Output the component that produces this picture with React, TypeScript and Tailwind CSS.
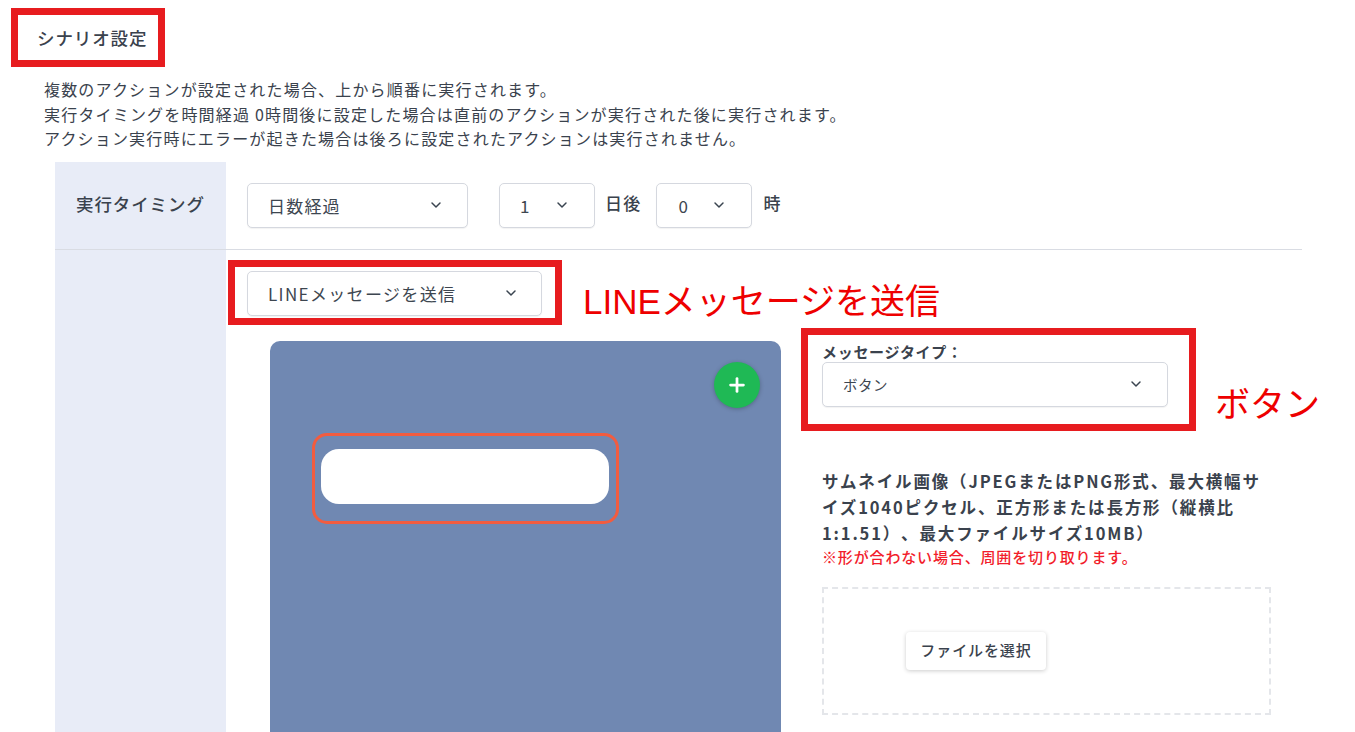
import { ChevronDown, Plus } from "lucide-react";

function Select({ label, className }: { label: string; className: string }) {
  return (
    <div
      className={`flex h-[45px] items-center justify-between rounded-[5px] border border-[#d5d8df] bg-white text-[#3d4650] shadow-[0_1px_1px_rgba(0,0,0,0.05)] ${className}`}
    >
      <span className="pt-[1px]">{label}</span>
      <ChevronDown size={16} strokeWidth={2.2} className="text-[#3a4450]" />
    </div>
  );
}

export default function App() {
  return (
    <div className="relative h-[732px] w-[1355px] overflow-hidden bg-white font-['Noto_Sans_CJK_JP','Noto_Sans',sans-serif] text-[#3a424d] [text-spacing-trim:space-all]">
      <h1 className="pl-[37px] pt-[26px] text-[17.5px] font-medium leading-[23px] tracking-[0.9px]">シナリオ設定</h1>

      <div className="mt-[28px] pl-[44px] text-[16px] leading-[24.5px] tracking-[1.18px]">
        <p>複数のアクションが設定された場合、上から順番に実行されます。</p>
        <p>実行タイミングを時間経過 0時間後に設定した場合は直前のアクションが実行された後に実行されます。</p>
        <p>アクション実行時にエラーが起きた場合は後ろに設定されたアクションは実行されません。</p>
      </div>

      <div className="ml-[55px] mt-[11px] w-[1247px]">
        <div className="flex h-[88px] border-b border-[#d9dce3]">
          <div className="flex w-[171px] items-center bg-[#e8ecf7] pb-[2px] pl-[21px] text-[17.5px] font-medium tracking-[0.9px]">
            実行タイミング
          </div>
          <div className="flex items-start pl-[21px] pt-[21px] text-[17px] tracking-[1.2px]">
            <Select label="日数経過" className="w-[221px] pl-[20px] pr-[23px]" />
            <Select label="1" className="ml-[31px] w-[96px] pl-[20px] pr-[24px]" />
            <span className="ml-[10px] mt-[7px] font-medium">日後</span>
            <Select label="0" className="ml-[15px] w-[96px] pl-[21px] pr-[24px]" />
            <span className="ml-[11px] mt-[7px] font-medium">時</span>
          </div>
        </div>

        <div className="flex h-[500px]">
          <div className="w-[171px] bg-[#e8ecf7]" />
          <div className="pl-[21px] pt-[21px]">
            <Select label="LINEメッセージを送信" className="w-[295px] pl-[20px] pr-[22px] text-[17px] tracking-[1.35px]" />
            <div className="flex pl-[23px] pt-[25px]">
              <div className="relative h-[420px] w-[511px] rounded-[10px] bg-[#7088b2]">
                <button className="absolute right-[21px] top-[21px] flex h-[46px] w-[46px] items-center justify-center rounded-full bg-[#1fb955] text-white shadow-[0_1px_4px_rgba(0,0,0,0.25)]">
                  <Plus size={22} strokeWidth={3} />
                </button>
                <div className="absolute left-[42px] top-[92px] flex h-[91px] w-[307px] items-center rounded-[15px] border-[3px] border-[#f25c3f] pl-[6px]">
                  <div className="mb-[4px] h-[55px] w-[288px] rounded-[18px] bg-white" />
                </div>
              </div>

              <div className="ml-[41px] w-[450px]">
                <div className="pt-[1px] text-[15px] font-bold leading-[19px] tracking-[0.7px]">メッセージタイプ：</div>
                <Select label="ボタン" className="mt-[1px] w-[346px] pl-[20px] pr-[23px] text-[14.5px] tracking-[0.5px]" />
                <p className="mt-[61px] w-[449px] text-[16.5px] font-bold leading-[26px] tracking-[1.85px]">
                  サムネイル画像（JPEGまたはPNG形式、最大横幅サイズ1040ピクセル、正方形または長方形（縦横比1:1.51）、最大ファイルサイズ10MB）
                </p>
                <p className="text-[15px] font-medium leading-[22px] tracking-[0.85px] text-[#f21d2b]">※形が合わない場合、周囲を切り取ります。</p>
                <div className="mt-[19px] flex h-[128px] w-[449px] items-center border-2 border-dashed border-[#e4e6ea] pl-[82px]">
                  <button className="flex h-[38px] w-[140px] items-center justify-center rounded-[4px] bg-white text-[15px] font-medium tracking-[0.9px] shadow-[0_1px_4px_rgba(0,0,0,0.2)]">
                    ファイルを選択
                  </button>
                </div>
              </div>
            </div>
          </div>
        </div>
      </div>

      {/* red annotations on top of the screen */}
      <div className="absolute left-[11px] top-[8px] h-[59px] w-[154px] border-[7px] border-[#e71c1f]" />
      <div className="absolute left-[228px] top-[260px] h-[65px] w-[334px] border-[7px] border-[#e71c1f]" />
      <div className="absolute left-[801px] top-[328px] h-[103px] w-[395px] border-[7px] border-[#e71c1f]" />
      <div className="absolute left-[583px] top-[281px] font-['Liberation_Sans','Noto_Sans_CJK_JP',sans-serif] text-[35px] leading-[42px] text-[#ee0000]">
        LINEメッセージを送信
      </div>
      <div className="absolute left-[1215px] top-[381px] text-[35px] leading-[42px] text-[#ee0000]">ボタン</div>
    </div>
  );
}
